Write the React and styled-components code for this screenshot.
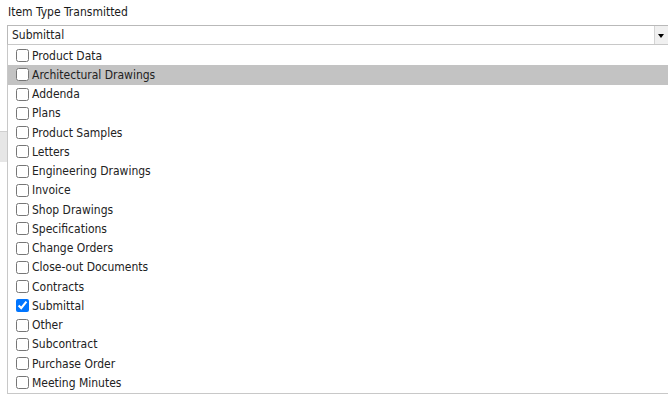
import React from 'react'
import styled, { createGlobalStyle } from 'styled-components'

const GlobalStyle = createGlobalStyle`
body {
  margin: 0;
  background: #fff;
  font-family: "DejaVu Sans Condensed", "DejaVu Sans", sans-serif;
  font-size: 12px;
  color: #222;
  overflow: hidden;
}
`;

const Page = styled.div`
position: relative;
height: 397px;
padding-left: 7px;
`;

const Label = styled.div`
padding: 5px 0 0 1px;
height: 20px;
font-size: 12px;
color: #1a1a1a;
`;

const Field = styled.div`
position: relative;
width: 665px;
z-index: 2;
`;

const SelectBox = styled.div`
display: flex;
height: 18px;
border: 1px solid #b9b9b9;
border-bottom-color: #c8c8c8;
background: #fff;
`;

const Value = styled.div`
flex: 1;
padding-left: 4px;
line-height: 19px;
font-size: 12px;
`;

const Arrow = styled.div`
width: 16px;
display: flex;
align-items: center;
justify-content: center;
background: #f0f0f0;
border-left: 1px solid #d4d4d4;
`;

const Triangle = styled.span`
width: 0;
height: 0;
border-left: 3px solid transparent;
border-right: 3px solid transparent;
border-top: 4px solid #000;
margin-right: 4px;
margin-top: 1px;
`;

const List = styled.ul`
position: absolute;
top: 100%;
left: 0;
right: 0;
margin: 0;
padding: 1px 0 0;
list-style: none;
background: #fff;
border-left: 1px solid #c8c8c8;
border-bottom: 1px solid #c8c8c8;
`;

const Option = styled.li`
display: flex;
align-items: center;
height: 19.25px;
padding-left: 8px;
background: ${p => (p.$active ? '#c3c3c3' : 'transparent')};
font-size: 12px;
color: #222;
`;

const Check = styled.input`
width: 13px;
height: 13px;
margin: 0 3px 0 0;
`;

const Backdrop = styled.div`
position: absolute;
top: 131px;
left: 0;
width: 120px;
height: 30px;
background: #e6e6e6;
border-top: 1px solid #d0d0d0;
z-index: 1;
`;

const items = [
  'Product Data',
  'Architectural Drawings',
  'Addenda',
  'Plans',
  'Product Samples',
  'Letters',
  'Engineering Drawings',
  'Invoice',
  'Shop Drawings',
  'Specifications',
  'Change Orders',
  'Close-out Documents',
  'Contracts',
  'Submittal',
  'Other',
  'Subcontract',
  'Purchase Order',
  'Meeting Minutes',
];

const App = () => {
  return (
    <Page>
      <GlobalStyle />
      <Label>Item Type Transmitted</Label>
      <Field>
        <SelectBox>
          <Value>Submittal</Value>
          <Arrow><Triangle /></Arrow>
        </SelectBox>
        <List>
          {items.map(item => (
            <Option key={item} $active={item === 'Architectural Drawings'}>
              <Check type="checkbox" defaultChecked={item === 'Submittal'} readOnly />
              {item}
            </Option>
          ))}
        </List>
      </Field>
      <Backdrop />
    </Page>
  )
}

export default App
